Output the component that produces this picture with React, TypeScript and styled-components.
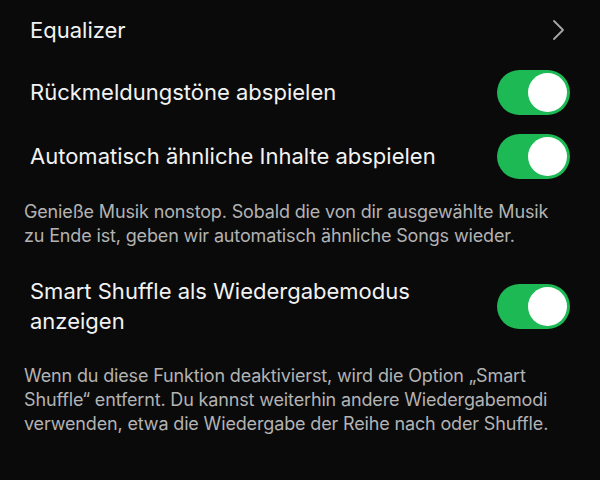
import styled, { createGlobalStyle } from 'styled-components'

const GlobalStyle = createGlobalStyle`
  html, body {
    margin: 0;
    padding: 0;
    background: #0a0a0a;
  }
  body {
    font-family: Inter, "Noto Sans", sans-serif;
    -webkit-font-smoothing: antialiased;
  }
`

const Page = styled.div`
  width: 600px;
  height: 480px;
  background: #0a0a0a;
  box-sizing: border-box;
  padding: 0 30px 0 0;
  overflow: hidden;
`

const Row = styled.div<{ $height?: number }>`
  display: flex;
  justify-content: space-between;
  align-items: center;
  min-height: ${(props) => props.$height ?? 64}px;
  padding-left: 30px;
`

const Title = styled.div<{ $wrap?: boolean }>`
  color: #f2f2f2;
  font-size: 22px;
  line-height: 30px;
  max-width: ${(props) => (props.$wrap ? '420px' : 'none')};
`

const Description = styled.p<{ $top?: number }>`
  margin: ${(props) => props.$top ?? 0}px 0 0 0;
  padding-left: 24px;
  padding-right: 10px;
  color: #b3b3b3;
  font-size: 18px;
  line-height: 24px;
  letter-spacing: -0.15px;
`

const Toggle = styled.div<{ $on?: boolean }>`
  flex: none;
  width: 73px;
  height: 45px;
  border-radius: 23px;
  background: ${(props) => (props.$on ? '#1db954' : '#535353')};
  position: relative;

  &::after {
    content: '';
    position: absolute;
    top: 3px;
    left: ${(props) => (props.$on ? '31px' : '3px')};
    width: 39px;
    height: 39px;
    border-radius: 50%;
    background: #ffffff;
  }
`

const Chevron = () => (
  <svg width="14" height="22" viewBox="0 0 14 22" style={{ marginRight: 4 }}>
    <path d="M2 2 L11 11 L2 20" fill="none" stroke="#a7a7a7" strokeWidth="1.8" strokeLinecap="round" strokeLinejoin="round" />
  </svg>
)

export default function App() {
  return (
    <Page>
      <GlobalStyle />
      <Row $height={60}>
        <Title>Equalizer</Title>
        <Chevron />
      </Row>
      <Row>
        <Title>Rückmeldungstöne abspielen</Title>
        <Toggle $on />
      </Row>
      <Row>
        <Title>Automatisch ähnliche Inhalte abspielen</Title>
        <Toggle $on />
      </Row>
      <Description $top={12}>
        Genieße Musik nonstop. Sobald die von dir ausgewählte Musik zu Ende ist, geben wir automatisch ähnliche Songs wieder.
      </Description>
      <Row $height={116}>
        <Title $wrap>Smart Shuffle als Wiedergabemodus anzeigen</Title>
        <Toggle $on />
      </Row>
      <Description>
        Wenn du diese Funktion deaktivierst, wird die Option „Smart Shuffle“ entfernt. Du kannst weiterhin andere Wiedergabemodi verwenden, etwa die Wiedergabe der Reihe nach oder Shuffle.
      </Description>
    </Page>
  )
}
